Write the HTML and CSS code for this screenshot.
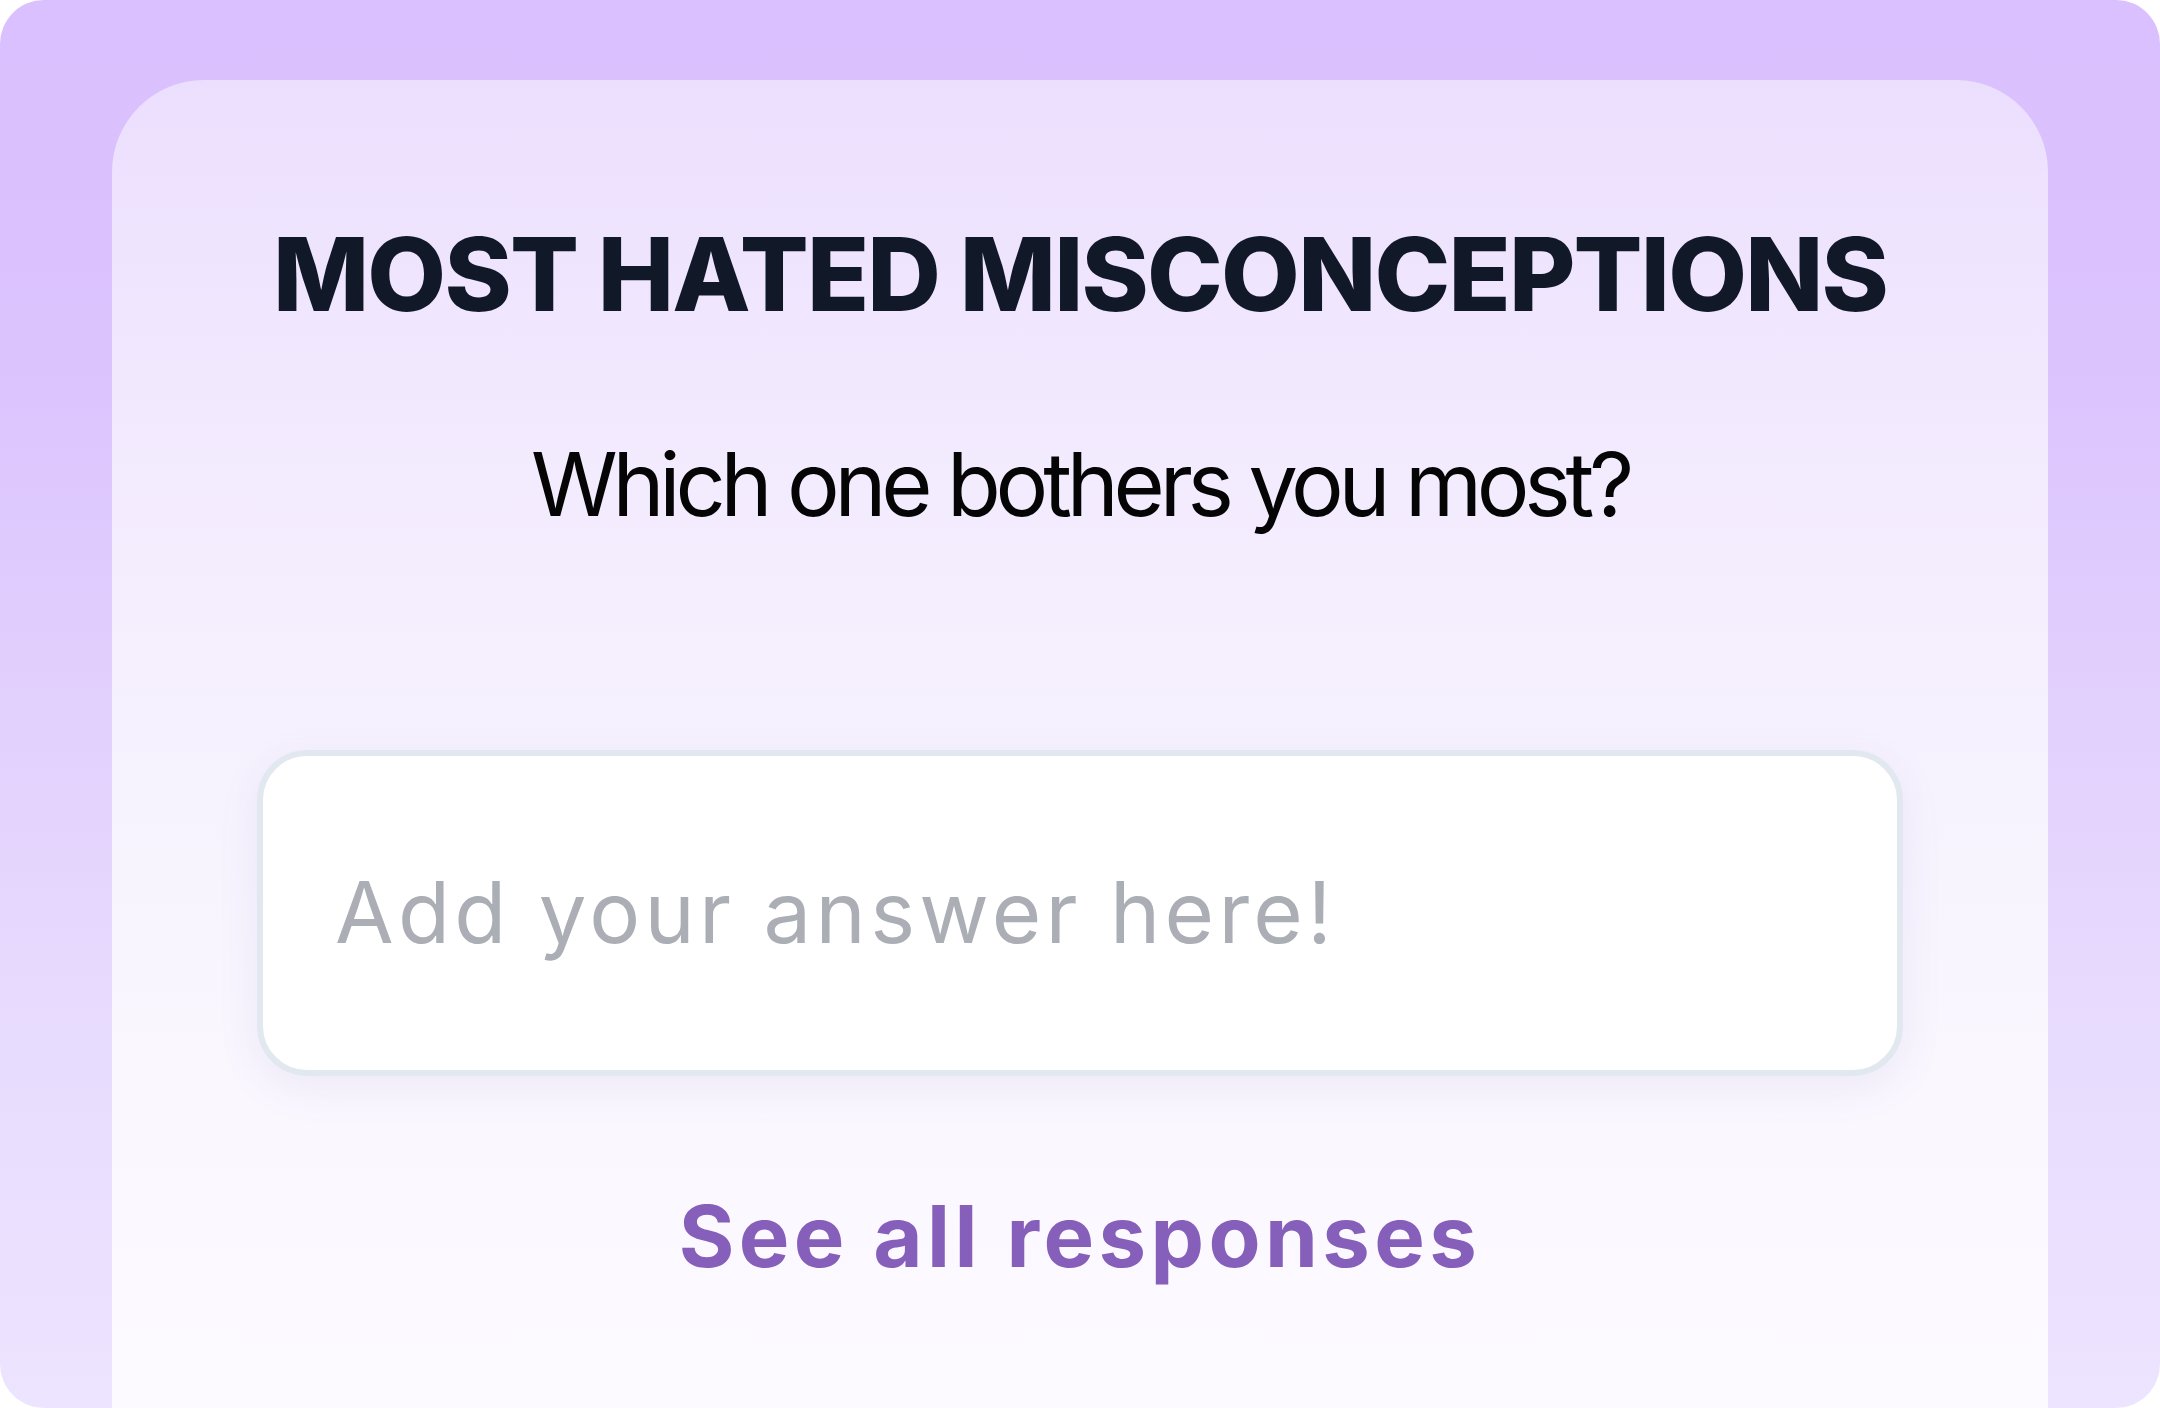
FILE: index.html
```html
<!DOCTYPE html>
<html lang="en">
<head>
<meta charset="utf-8">
<title>Most Hated Misconceptions</title>
<link rel="stylesheet" href="styles.css">
</head>
<body>
<div class="frame">
  <main class="card">
    <h1 class="title">MOST HATED MISCONCEPTIONS</h1>
    <p class="question">Which one bothers you most?</p>
    <input class="answer" type="text" placeholder="Add your answer here!">
    <a class="see-all" href="#">See all responses</a>
  </main>
</div>
</body>
</html>
```
FILE: styles.css
```css
html, body {
  margin: 0;
  padding: 0;
  background: #ffffff;
}

.frame {
  box-sizing: border-box;
  width: 2160px;
  height: 1408px;
  border-radius: 44px;
  padding: 80px 112px 0;
  overflow: hidden;
  background: linear-gradient(180deg, #dac0fe 0%, #dbc3fe 25%, #e2d0fd 50%, #e8dcfe 75%, #ede4ff 100%);
  font-family: Inter, "Noto Sans", sans-serif;
}

.card {
  box-sizing: border-box;
  height: 100%;
  border-radius: 92px 92px 0 0;
  background: linear-gradient(180deg, #ecdffe 0%, #f3ebfe 30%, #f7f3fe 55%, #fbf9ff 85%, #fcfaff 100%);
  padding-top: 133px;
  display: flex;
  flex-direction: column;
  align-items: center;
}

.title {
  margin: 0;
  font-size: 102px;
  line-height: 1.2;
  font-weight: 800;
  color: #111827;
  letter-spacing: -1.8px;
}

.question {
  margin: 97px 0 0;
  font-size: 88px;
  line-height: 1.2;
  font-weight: 400;
  color: #050505;
  letter-spacing: -5.2px;
}

.answer {
  box-sizing: border-box;
  margin-top: 212px;
  width: 1646px;
  height: 326px;
  border: 6px solid #e2e8f0;
  border-radius: 50px;
  background: #ffffff;
  padding: 0 0 0 72px;
  font-family: Inter, "Noto Sans", sans-serif;
  font-size: 85px;
  letter-spacing: 4.3px;
  color: #111827;
  outline: none;
  box-shadow: 0 12px 44px rgba(90, 60, 150, 0.08);
}

.answer::placeholder {
  color: #abafb5;
  opacity: 1;
}

.see-all {
  margin-top: 110px;
  font-size: 85px;
  line-height: 1.2;
  font-weight: 700;
  color: #865fbb;
  text-decoration: none;
  letter-spacing: 4.4px;
}
```
